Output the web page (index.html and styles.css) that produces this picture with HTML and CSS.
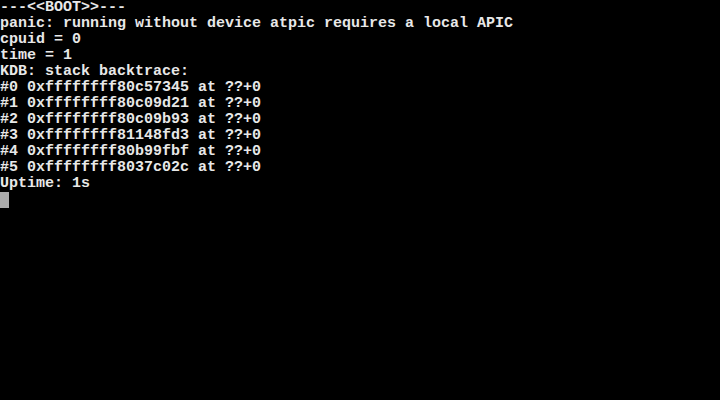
FILE: index.html
```html
<!DOCTYPE html>
<html lang="en">
<head>
  <meta charset="UTF-8">
  <title>Console</title>
  <link rel="stylesheet" href="styles.css">
</head>
<body>
  <div class="console">
    <div class="line">---&lt;&lt;BOOT&gt;&gt;---</div>
    <div class="line">panic: running without device atpic requires a local APIC</div>
    <div class="line">cpuid = 0</div>
    <div class="line">time = 1</div>
    <div class="line">KDB: stack backtrace:</div>
    <div class="line">#0 0xffffffff80c57345 at ??+0</div>
    <div class="line">#1 0xffffffff80c09d21 at ??+0</div>
    <div class="line">#2 0xffffffff80c09b93 at ??+0</div>
    <div class="line">#3 0xffffffff81148fd3 at ??+0</div>
    <div class="line">#4 0xffffffff80b99fbf at ??+0</div>
    <div class="line">#5 0xffffffff8037c02c at ??+0</div>
    <div class="line">Uptime: 1s</div>
    <div class="line"><span class="cursor"></span></div>
  </div>
</body>
</html>
```

FILE: styles.css
```css
html, body {
  margin: 0;
  padding: 0;
  background: #000;
  height: 100%;
}

.console {
  color: #e8e8e8;
  font-family: "Liberation Mono", "DejaVu Sans Mono", monospace;
  font-size: 15px;
  font-weight: bold;
  line-height: 16px;
}

.line {
  height: 16px;
  white-space: pre;
}

.cursor {
  display: inline-block;
  width: 9px;
  height: 16px;
  background: #aaa;
  vertical-align: top;
}
```
